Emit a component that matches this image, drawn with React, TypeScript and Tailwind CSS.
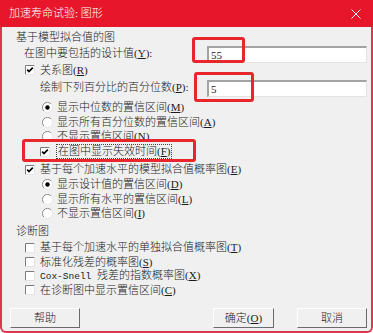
import React from 'react';

const font = { fontFamily: '"Liberation Serif", "Noto Sans CJK SC", serif' };

const CheckBox = ({ checked }: { checked?: boolean }) => (
  <svg width="10" height="10" viewBox="0 0 10 10" className="shrink-0">
    <rect x="0" y="0" width="10" height="10" fill="#ffffff" />
    <path d="M0.5 9.5 V0.5 H9.5" fill="none" stroke="#7a7a7a" />
    <path d="M9.5 0.5 V9.5 H0.5" fill="none" stroke="#e4e4e4" />
    {checked && <path d="M2.2 4.6 L4 6.6 L7.8 2.6" fill="none" stroke="#000" strokeWidth="1.7" />}
  </svg>
);

const Radio = ({ checked }: { checked?: boolean }) => (
  <svg width="11" height="11" viewBox="0 0 11 11" className="shrink-0">
    <circle cx="5.5" cy="5.5" r="5" fill="#ffffff" />
    <path d="M1.9 9.1 A5 5 0 0 1 9.1 1.9" fill="none" stroke="#8a8a8a" />
    <path d="M9.1 1.9 A5 5 0 0 1 1.9 9.1" fill="none" stroke="#e6e6e6" />
    {checked && <circle cx="5.5" cy="5.5" r="2.2" fill="#000" />}
  </svg>
);

const Key = ({ k }: { k: string }) => (
  <span>
    (<span className="underline underline-offset-1">{k}</span>)
  </span>
);

const Field = ({ value }: { value: string }) => (
  <div className="ml-auto flex h-[17px] w-[160px] items-center self-end border-t-2 border-l-2 border-r border-b border-t-[#a3a3a3] border-l-[#a3a3a3] border-r-[#e3e3e3] border-b-[#e3e3e3] bg-white pl-[2px] text-[11px]">
    {value}
  </div>
);

const Mark = ({ className }: { className: string }) => (
  <div className={`pointer-events-none absolute rounded-[3px] border-[3px] border-[#e8262b] ${className}`} />
);

export default function App() {
  return (
    <div className="flex h-[333px] w-[373px] flex-col font-light text-[#1a1a1a]" style={font}>
      <div className="flex h-[27px] shrink-0 items-center justify-between bg-[#e8162b] pl-[9px] pr-[12px] text-[11px] text-white">
        <span>加速寿命试验: 图形</span>
        <svg width="10" height="10" viewBox="0 0 10 10">
          <path d="M0.5 0.5 L9.5 9.5 M9.5 0.5 L0.5 9.5" stroke="#ffffff" strokeWidth="1" />
        </svg>
      </div>

      <div className="relative flex flex-1 flex-col rounded-b-[6px] border-x-2 border-b-2 border-[#d9394f] bg-[#f0f0f0] pt-[3px] text-[11px] leading-none">
        <div className="flex h-[14px] items-center pl-[14px]">基于模型拟合值的图</div>

        <div className="flex h-[19px] items-center pl-[22px] pr-[4px]">
          <span>
            在图中要包括的设计值<Key k="Y" />:
          </span>
          <Field value="55" />
        </div>

        <div className="flex h-[14px] items-center gap-[5px] pl-[23px]">
          <CheckBox checked />
          <span>
            关系图<Key k="R" />
          </span>
        </div>

        <div className="flex h-[20px] items-center pl-[38px] pr-[4px]">
          <span>
            绘制下列百分比的百分位数<Key k="P" />:
          </span>
          <Field value="5" />
        </div>

        <div className="mt-[3px] flex h-[15px] items-center gap-[4px] pl-[40px]">
          <Radio checked />
          <span>
            显示中位数的置信区间<Key k="M" />
          </span>
        </div>
        <div className="flex h-[14px] items-center gap-[4px] pl-[40px]">
          <Radio />
          <span>
            显示所有百分位数的置信区间<Key k="A" />
          </span>
        </div>
        <div className="flex h-[15px] items-center gap-[4px] pl-[40px]">
          <Radio />
          <span>
            不显示置信区间<Key k="N" />
          </span>
        </div>

        <div className="flex h-[15px] items-center gap-[6px] pl-[38px]">
          <CheckBox checked />
          <span className="border border-dotted border-[#444] px-[1px] py-[1px]">
            在图中显示失效时间<Key k="F" />
          </span>
        </div>

        <div className="mt-[3px] flex h-[15px] items-center gap-[5px] pl-[23px]">
          <CheckBox checked />
          <span>
            基于每个加速水平的模型拟合值概率图<Key k="E" />
          </span>
        </div>
        <div className="flex h-[15px] items-center gap-[4px] pl-[40px]">
          <Radio checked />
          <span>
            显示设计值的置信区间<Key k="D" />
          </span>
        </div>
        <div className="flex h-[14px] items-center gap-[4px] pl-[40px]">
          <Radio />
          <span>
            显示所有水平的置信区间<Key k="L" />
          </span>
        </div>
        <div className="flex h-[14px] items-center gap-[4px] pl-[40px]">
          <Radio />
          <span>
            不显示置信区间<Key k="I" />
          </span>
        </div>

        <div className="mt-[3px] flex h-[16px] items-center pl-[14px]">诊断图</div>

        <div className="mt-[1px] flex h-[15px] items-center gap-[5px] pl-[23px]">
          <CheckBox />
          <span>
            基于每个加速水平的单独拟合值概率图<Key k="T" />
          </span>
        </div>
        <div className="flex h-[14px] items-center gap-[5px] pl-[23px]">
          <CheckBox />
          <span>
            标准化残差的概率图<Key k="S" />
          </span>
        </div>
        <div className="flex h-[14px] items-center gap-[5px] pl-[23px]">
          <CheckBox />
          <span>
            <span className="font-['Liberation_Mono'] text-[9.5px]">Cox-Snell </span>
            残差的指数概率图<Key k="X" />
          </span>
        </div>
        <div className="flex h-[14px] items-center gap-[5px] pl-[23px]">
          <CheckBox />
          <span>
            在诊断图中显示置信区间<Key k="C" />
          </span>
        </div>

        <div className="mt-[11px] flex h-[20px] items-stretch pl-[8px] pr-[4px]">
          <button className="flex w-[70px] items-center justify-center border border-t-white border-l-white border-r-[#6b6b6b] border-b-[#6b6b6b] bg-[#f0f0f0] text-[11px]">
            帮助
          </button>
          <button className="ml-auto flex w-[61px] items-center justify-center border border-t-white border-l-white border-r-[#6b6b6b] border-b-[#6b6b6b] bg-[#f0f0f0] text-[11px]">
            确定<Key k="O" />
          </button>
          <button className="ml-[23px] flex w-[70px] items-center justify-center border border-t-white border-l-white border-r-[#6b6b6b] border-b-[#6b6b6b] bg-[#f0f0f0] text-[11px]">
            取消
          </button>
        </div>

        <Mark className="left-[190px] top-[10px] h-[26px] w-[53px]" />
        <Mark className="left-[192px] top-[45px] h-[30px] w-[60px]" />
        <Mark className="left-[20px] top-[112px] h-[23px] w-[174px]" />
      </div>
    </div>
  );
}
